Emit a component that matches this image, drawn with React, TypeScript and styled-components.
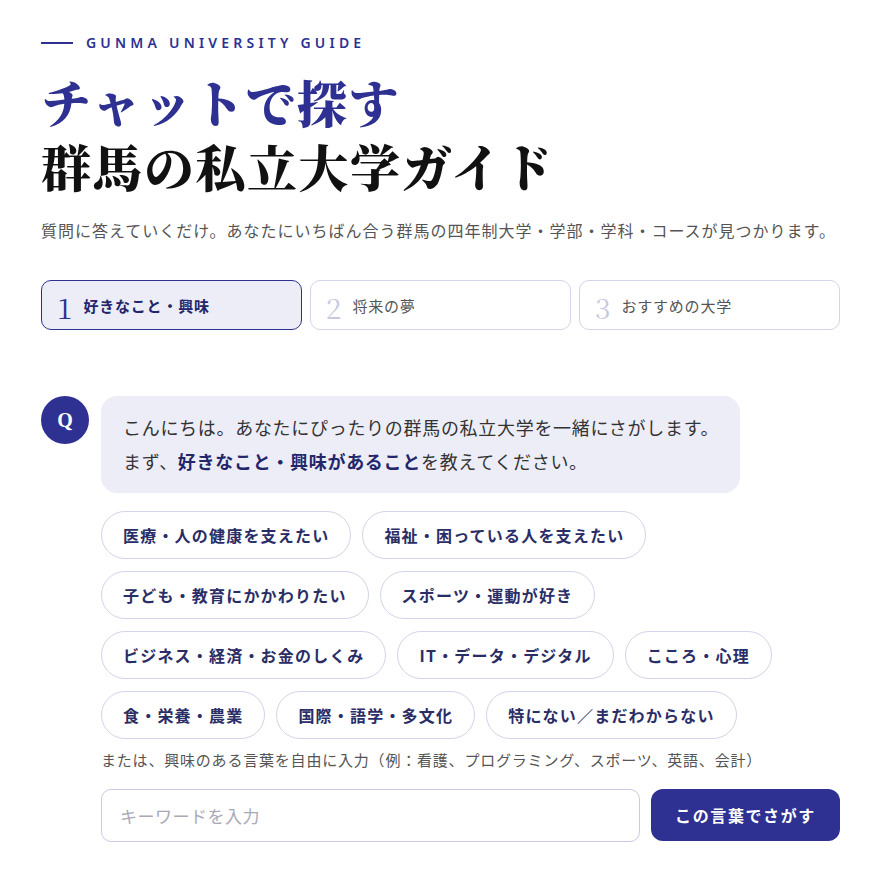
import styled, { createGlobalStyle } from "styled-components";

const GlobalStyle = createGlobalStyle`
    body {
        margin: 0;
        background: #fff;
        font-family: "Noto Sans CJK JP", "Noto Sans", sans-serif;
        color: #333;
    }
`;

const Page = styled.div`
    width: 799px;
    padding: 34px 0 40px 41px;
`;

const Eyebrow = styled.div`
    display: flex;
    align-items: center;
    gap: 13px;
    color: #2e3192;
    font-family: "Noto Sans", "Noto Sans CJK JP", sans-serif;
    font-weight: 600;
    font-size: 14px;
    letter-spacing: 4.2px;
    line-height: 18px;
    &::before {
        content: "";
        width: 32px;
        height: 2px;
        background: #2e3192;
    }
`;

const Title = styled.h1`
    margin: 17px 0 0;
    font-family: "Noto Serif CJK JP", "Noto Sans CJK JP", serif;
    font-weight: 900;
    font-size: 50px;
    line-height: 64px;
    letter-spacing: 1.5px;
`;

const TitleLine = styled.span<{ $accent?: boolean }>`
    display: block;
    height: 64px;
    color: ${(p) => (p.$accent ? "#2e3192" : "#111")};
`;

const Lead = styled.p`
    margin: 20px 0 0;
    font-size: 16px;
    line-height: 26px;
    letter-spacing: 1px;
    color: #555;
    white-space: nowrap;
`;

const Steps = styled.div`
    display: grid;
    grid-template-columns: repeat(3, 1fr);
    gap: 8px;
    margin-top: 37px;
`;

const Step = styled.div<{ $active?: boolean }>`
    display: flex;
    align-items: center;
    gap: 11px;
    height: 50px;
    box-sizing: border-box;
    padding: 0 15px;
    border-radius: 10px;
    border: 1px solid ${(p) => (p.$active ? "#2e3192" : "#d3d3ea")};
    background: ${(p) => (p.$active ? "#ededf7" : "#fff")};
`;

const StepNum = styled.span<{ $active?: boolean }>`
    font-family: "Noto Serif CJK JP", "Liberation Serif", serif;
    font-size: 28px;
    line-height: 1;
    padding-top: 3px;
    color: ${(p) => (p.$active ? "#2e3192" : "#c7c9e2")};
`;

const StepLabel = styled.span<{ $active?: boolean }>`
    font-size: 15px;
    letter-spacing: 0.8px;
    font-weight: ${(p) => (p.$active ? 700 : 400)};
    color: ${(p) => (p.$active ? "#23266b" : "#555")};
`;

const Chat = styled.div`
    display: grid;
    grid-template-columns: 48px 1fr;
    column-gap: 12px;
    margin-top: 66px;
`;

const Avatar = styled.div`
    width: 48px;
    height: 48px;
    border-radius: 50%;
    background: #2e3192;
    color: #fff;
    display: flex;
    align-items: center;
    justify-content: center;
    font-family: "Liberation Serif", serif;
    font-weight: 700;
    font-size: 20px;
`;

const Body = styled.div`
    display: flex;
    flex-direction: column;
`;

const Bubble = styled.div`
    align-self: flex-start;
    background: #ededf7;
    border-radius: 16px;
    padding: 14px 21px 15px 22px;
    font-size: 18px;
    line-height: 34px;
    letter-spacing: 0.7px;
    color: #333;
`;

const Strong = styled.strong`
    color: #23266b;
    font-weight: 700;
`;

const Chips = styled.div`
    display: flex;
    flex-wrap: wrap;
    gap: 12px 11px;
    margin-top: 18px;
    max-width: 700px;
`;

const Chip = styled.button`
    height: 48px;
    padding: 0 21px;
    border: 1px solid #d3d3ea;
    border-radius: 24px;
    background: #fff;
    font-family: "Noto Sans CJK JP", sans-serif;
    font-size: 16px;
    font-weight: 700;
    color: #2a2d66;
    letter-spacing: 1.2px;
`;

const Hint = styled.p`
    margin: 10px 0 0;
    font-size: 15px;
    line-height: 22px;
    letter-spacing: 0.8px;
    color: #555;
`;

const Form = styled.div`
    display: flex;
    gap: 11px;
    margin-top: 18px;
`;

const Input = styled.input`
    flex: 1;
    height: 53px;
    box-sizing: border-box;
    padding: 0 18px;
    border: 1px solid #ccc9e8;
    border-radius: 10px;
    font-family: "Noto Sans CJK JP", sans-serif;
    font-size: 17px;
    letter-spacing: 0.5px;
    &::placeholder {
        color: #a9a9b6;
    }
`;

const Submit = styled.button`
    width: 189px;
    height: 52px;
    border: none;
    border-radius: 12px;
    background: #2e3192;
    color: #fff;
    font-family: "Noto Sans CJK JP", sans-serif;
    font-weight: 700;
    font-size: 16px;
    letter-spacing: 1.6px;
`;

const steps = ["好きなこと・興味", "将来の夢", "おすすめの大学"];

const choices = [
    "医療・人の健康を支えたい",
    "福祉・困っている人を支えたい",
    "子ども・教育にかかわりたい",
    "スポーツ・運動が好き",
    "ビジネス・経済・お金のしくみ",
    "IT・データ・デジタル",
    "こころ・心理",
    "食・栄養・農業",
    "国際・語学・多文化",
    "特にない／まだわからない",
];

export default function App() {
    return (
        <Page>
            <GlobalStyle />
            <Eyebrow>GUNMA UNIVERSITY GUIDE</Eyebrow>
            <Title>
                <TitleLine $accent>チャットで探す</TitleLine>
                <TitleLine>群馬の私立大学ガイド</TitleLine>
            </Title>
            <Lead>
                質問に答えていくだけ。あなたにいちばん合う群馬の四年制大学・学部・学科・コースが見つかります。
            </Lead>
            <Steps>
                {steps.map((s, i) => (
                    <Step key={s} $active={i === 0}>
                        <StepNum $active={i === 0}>{i + 1}</StepNum>
                        <StepLabel $active={i === 0}>{s}</StepLabel>
                    </Step>
                ))}
            </Steps>
            <Chat>
                <Avatar>Q</Avatar>
                <Body>
                    <Bubble>
                        こんにちは。あなたにぴったりの群馬の私立大学を一緒にさがします。
                        <br />
                        まず、<Strong>好きなこと・興味があること</Strong>を教えてください。
                    </Bubble>
                    <Chips>
                        {choices.map((c) => (
                            <Chip key={c}>{c}</Chip>
                        ))}
                    </Chips>
                    <Hint>
                        または、興味のある言葉を自由に入力（例：看護、プログラミング、スポーツ、英語、会計）
                    </Hint>
                    <Form>
                        <Input placeholder="キーワードを入力" />
                        <Submit>この言葉でさがす</Submit>
                    </Form>
                </Body>
            </Chat>
        </Page>
    );
}
